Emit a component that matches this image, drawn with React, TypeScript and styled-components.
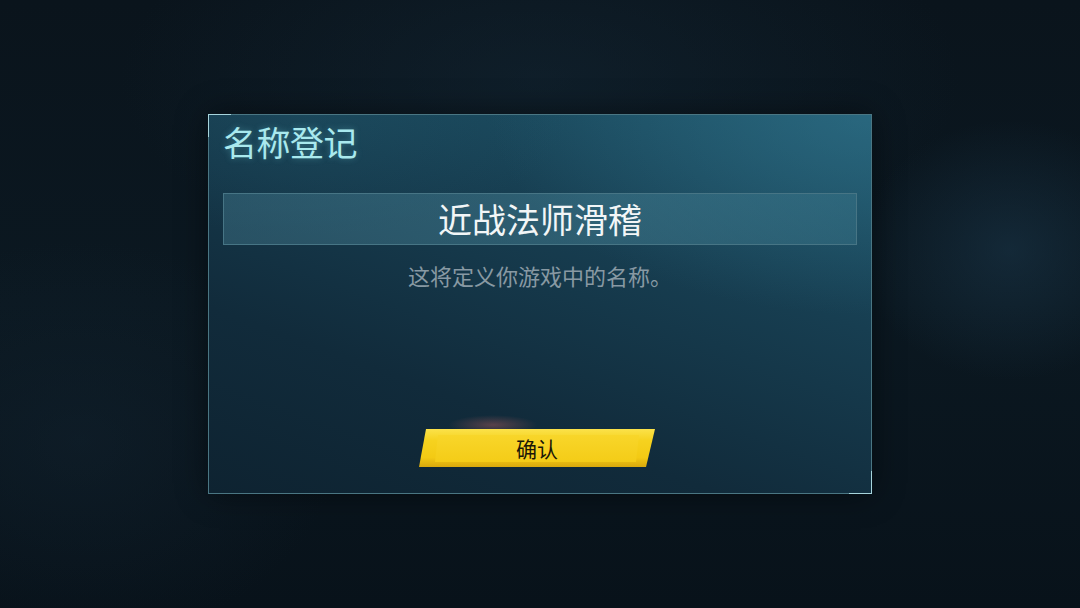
import React from 'react';
import styled, { createGlobalStyle } from 'styled-components';

const GlobalStyle = createGlobalStyle`
  html, body {
    margin: 0;
    padding: 0;
    background: #0a141c;
  }
  #root {
    height: 100vh;
  }
`;

const Screen = styled.div`
  height: 608px;
  width: 1080px;
  display: flex;
  align-items: center;
  justify-content: center;
  font-family: "Noto Sans CJK SC", "Noto Sans", sans-serif;
  background:
    radial-gradient(ellipse 150px 130px at 1010px 250px, rgba(30, 62, 84, 0.45), transparent),
    radial-gradient(ellipse 420px 200px at 540px 80px, rgba(22, 44, 60, 0.4), transparent),
    radial-gradient(ellipse 260px 200px at 80px 440px, rgba(20, 38, 52, 0.4), transparent),
    linear-gradient(180deg, #0a141c 0%, #0b1821 50%, #08121a 100%);
`;

const Panel = styled.section`
  position: relative;
  width: 664px;
  height: 380px;
  box-sizing: border-box;
  border: 1px solid #4a7683;
  padding: 7px 14px 26px 14px;
  display: flex;
  flex-direction: column;
  align-items: stretch;
  background:
    radial-gradient(ellipse 380px 200px at 100% 0%, rgba(52, 120, 145, 0.5), transparent),
    radial-gradient(ellipse 260px 120px at 15% 0%, rgba(35, 90, 110, 0.3), transparent),
    linear-gradient(200deg, #1e566b 0%, #173e51 35%, #112b3b 70%, #0e2331 100%);
  box-shadow: 0 0 30px rgba(0, 0, 0, 0.45);

  &::before,
  &::after {
    content: '';
    position: absolute;
    width: 22px;
    height: 22px;
    pointer-events: none;
  }
  &::before {
    top: -1px;
    left: -1px;
    border-top: 1px solid #a6d4dc;
    border-left: 1px solid #a6d4dc;
  }
  &::after {
    bottom: -1px;
    right: -1px;
    border-bottom: 1px solid #a6d4dc;
    border-right: 1px solid #a6d4dc;
  }
`;

const Title = styled.h1`
  margin: 0;
  font-size: 34px;
  line-height: 40px;
  font-weight: 400;
  color: #a9e9ee;
  letter-spacing: -0.5px;
  text-shadow: 0 0 6px rgba(120, 220, 230, 0.35);
`;

const NameBox = styled.div`
  margin-top: 31px;
  height: 52px;
  box-sizing: border-box;
  border: 1px solid #477585;
  background: linear-gradient(90deg, rgba(70, 125, 145, 0.42), rgba(70, 130, 150, 0.48) 60%, rgba(60, 120, 140, 0.42));
  display: flex;
  align-items: center;
  justify-content: center;
  font-size: 34px;
  color: #f2f6f7;
  line-height: 1;
`;

const Hint = styled.p`
  margin: 15px 0 0 0;
  text-align: center;
  font-size: 22px;
  line-height: 30px;
  color: #8899a3;
`;

const Footer = styled.div`
  margin-top: auto;
  display: flex;
  justify-content: center;
  position: relative;
`;

const Glow = styled.div`
  position: absolute;
  left: 225px;
  top: -14px;
  width: 90px;
  height: 20px;
  border-radius: 50%;
  background: radial-gradient(ellipse at center, rgba(255, 120, 110, 0.3), transparent 70%);
  pointer-events: none;
`;

const ConfirmButton = styled.button`
  position: relative;
  width: 236px;
  height: 38px;
  margin-right: 6px;
  border: none;
  padding: 0;
  cursor: pointer;
  clip-path: polygon(7px 0, 100% 0, calc(100% - 9px) 100%, 0 100%);
  background: linear-gradient(180deg, #fbe24a 0%, #f6d21f 30%, #f3ca14 75%, #d9a90d 100%);
  font-family: "Noto Sans CJK SC", "Noto Sans", sans-serif;
  font-size: 21px;
  color: #1b1708;
  display: flex;
  align-items: center;
  justify-content: center;

  &::before {
    content: '';
    position: absolute;
    inset: 6px 16px 5px 16px;
    background: linear-gradient(180deg, #f8d62a, #f4cc17);
    clip-path: polygon(3px 0, 100% 0, calc(100% - 3px) 100%, 0 100%);
  }
`;

const ButtonLabel = styled.span`
  position: relative;
  line-height: 1;
`;

export default function App() {
  return (
    <>
      <GlobalStyle />
      <Screen>
        <Panel>
          <Title>名称登记</Title>
          <NameBox>近战法师滑稽</NameBox>
          <Hint>这将定义你游戏中的名称。</Hint>
          <Footer>
            <Glow />
            <ConfirmButton>
              <ButtonLabel>确认</ButtonLabel>
            </ConfirmButton>
          </Footer>
        </Panel>
      </Screen>
    </>
  );
}
